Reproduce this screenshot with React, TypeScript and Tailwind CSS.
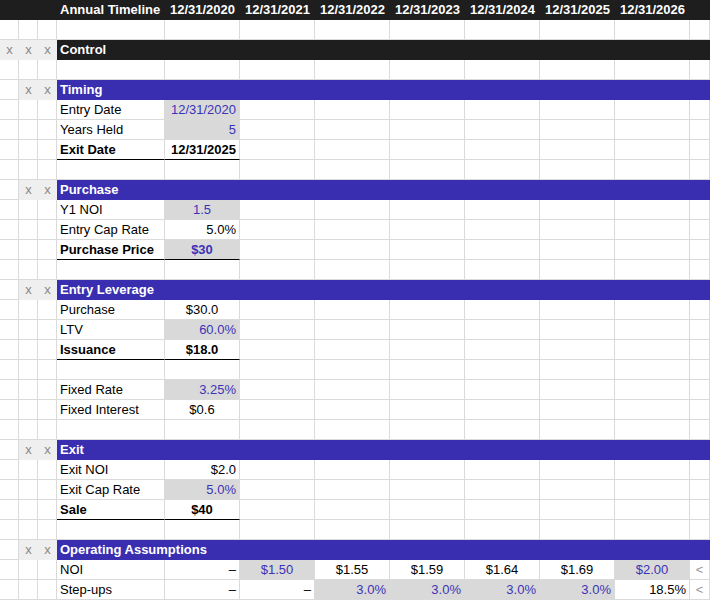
type C = { t?: string; cls?: string };
const W = [19, 19, 19, 108, 75, 75, 75, 75, 75, 75, 75, 20];
const DATES = ["12/31/2020", "12/31/2021", "12/31/2022", "12/31/2023", "12/31/2024", "12/31/2025", "12/31/2026"];
const inp = "bg-[#d9d9d9] text-[#3a33b8] text-right";
const num = "text-right";

type Row = { kind: "blank" | "band" | "data"; color?: string; xs?: number; title?: string; cells?: C[]; bold?: boolean };

const rows: Row[] = [
  { kind: "band", color: "bg-[#1e1e1e]", xs: 0, title: "" },
  { kind: "blank" },
  { kind: "band", color: "bg-[#1e1e1e]", xs: 3, title: "Control" },
  { kind: "blank" },
  { kind: "band", color: "bg-[#3a2eb0]", xs: 2, title: "Timing" },
  { kind: "data", cells: [{ t: "Entry Date" }, { t: "12/31/2020", cls: inp }] },
  { kind: "data", cells: [{ t: "Years Held" }, { t: "5", cls: inp }] },
  { kind: "data", bold: true, cells: [{ t: "Exit Date" }, { t: "12/31/2025", cls: num }] },
  { kind: "blank" },
  { kind: "band", color: "bg-[#3a2eb0]", xs: 2, title: "Purchase" },
  { kind: "data", cells: [{ t: "Y1 NOI" }, { t: "1.5", cls: inp + " !text-center" }] },
  { kind: "data", cells: [{ t: "Entry Cap Rate" }, { t: "5.0%", cls: num }] },
  { kind: "data", bold: true, cells: [{ t: "Purchase Price" }, { t: "$30", cls: inp + " !text-center" }] },
  { kind: "blank" },
  { kind: "band", color: "bg-[#3a2eb0]", xs: 2, title: "Entry Leverage" },
  { kind: "data", cells: [{ t: "Purchase" }, { t: "$30.0", cls: "" }] },
  { kind: "data", cells: [{ t: "LTV" }, { t: "60.0%", cls: inp }] },
  { kind: "data", bold: true, cells: [{ t: "Issuance" }, { t: "$18.0", cls: "" }] },
  { kind: "blank" },
  { kind: "data", cells: [{ t: "Fixed Rate" }, { t: "3.25%", cls: inp }] },
  { kind: "data", cells: [{ t: "Fixed Interest" }, { t: "$0.6", cls: "" }] },
  { kind: "blank" },
  { kind: "band", color: "bg-[#3a2eb0]", xs: 2, title: "Exit" },
  { kind: "data", cells: [{ t: "Exit NOI" }, { t: "$2.0", cls: num }] },
  { kind: "data", cells: [{ t: "Exit Cap Rate" }, { t: "5.0%", cls: inp }] },
  { kind: "data", bold: true, cells: [{ t: "Sale" }, { t: "$40", cls: "" }] },
  { kind: "blank" },
  { kind: "band", color: "bg-[#3a2eb0]", xs: 2, title: "Operating Assumptions" },
  {
    kind: "data",
    cells: [
      { t: "NOI" }, { t: "–", cls: num }, { t: "$1.50", cls: inp + " !text-center" }, { t: "$1.55", cls: "text-center" },
      { t: "$1.59", cls: "text-center" }, { t: "$1.64", cls: "text-center" }, { t: "$1.69", cls: "text-center" },
      { t: "$2.00", cls: inp + " !text-center" }, { t: "<", cls: "text-[#999] text-center" },
    ],
  },
  {
    kind: "data",
    cells: [
      { t: "Step-ups" }, { t: "–", cls: num }, { t: "–", cls: num }, { t: "3.0%", cls: inp }, { t: "3.0%", cls: inp },
      { t: "3.0%", cls: inp }, { t: "3.0%", cls: inp }, { t: "18.5%", cls: num }, { t: "<", cls: "text-[#999] text-center" },
    ],
  },
];

function Cell({ w, children, cls = "" }: { w: number; children?: React.ReactNode; cls?: string }) {
  return (
    <div style={{ width: w }} className={`h-5 shrink-0 border-r border-b border-[#dadada] px-[3px] leading-[19px] whitespace-nowrap overflow-hidden ${cls}`}>
      {children}
    </div>
  );
}

export default function App() {
  return (
    <div className="w-[710px] h-[602px] overflow-hidden bg-white text-[13px] text-black" style={{ fontFamily: "'Liberation Sans', Arial, sans-serif" }}>
      {rows.map((r, i) => {
        if (i === 0) {
          return (
            <div key={i} className="flex bg-[#1e1e1e] text-white font-bold h-5">
              <div className="w-[57px] shrink-0" />
              <div className="w-[108px] shrink-0 px-[3px] leading-[20px]">Annual Timeline</div>
              {DATES.map((d) => (
                <div key={d} className="w-[75px] shrink-0 text-center leading-[20px]">{d}</div>
              ))}
            </div>
          );
        }
        if (r.kind === "blank") {
          return (
            <div key={i} className="flex">
              {W.map((w, j) => <Cell key={j} w={w} />)}
            </div>
          );
        }
        if (r.kind === "band") {
          return (
            <div key={i} className="flex">
              {[0, 1, 2].map((j) => (
                <Cell key={j} w={19} cls={j >= 3 - (r.xs ?? 0) ? "bg-[#efefef] text-[#888] text-center !border-r-0 !border-[#efefef]" : ""}>
                  {j >= 3 - (r.xs ?? 0) ? "x" : ""}
                </Cell>
              ))}
              <div className={`flex-1 h-5 ${r.color} text-white font-bold px-[3px] leading-[20px]`}>{r.title}</div>
            </div>
          );
        }
        const cells = r.cells ?? [];
        return (
          <div key={i} className="flex">
            {W.map((w, j) => {
              const c = j >= 3 ? cells[j - 3] : undefined;
              const boldLine = r.bold && (j === 3 || j === 4) ? "!border-b-black font-bold" : "";
              let cls = c?.cls ?? "";
              if (j === 4 && c && !c.cls) cls = "text-center";
              return (
                <Cell key={j} w={w} cls={`${cls} ${boldLine}`}>
                  {c?.t}
                </Cell>
              );
            })}
          </div>
        );
      })}
    </div>
  );
}
